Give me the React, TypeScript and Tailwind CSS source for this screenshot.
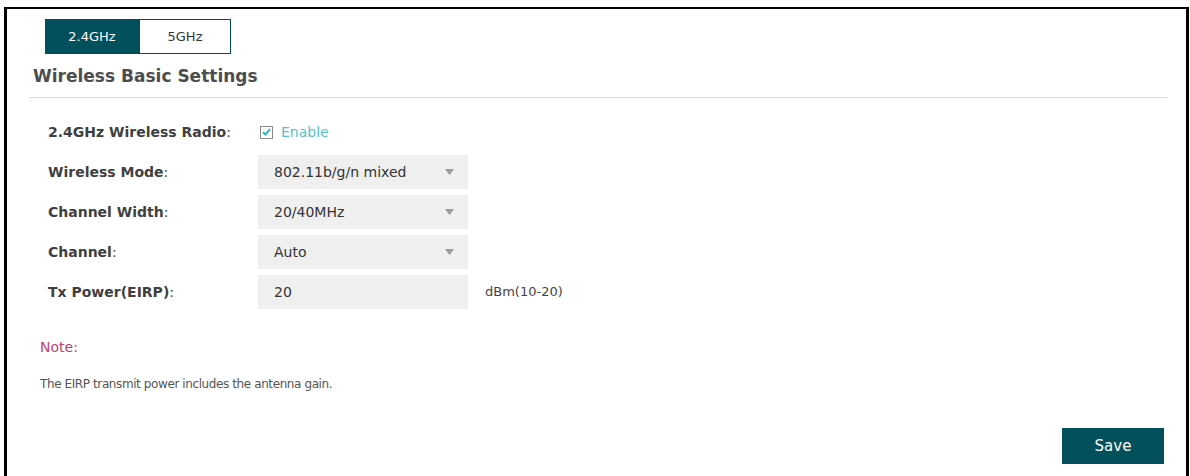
import { useState } from "react";

const selects = [
  { label: "Wireless Mode", value: "802.11b/g/n mixed" },
  { label: "Channel Width", value: "20/40MHz" },
  { label: "Channel", value: "Auto" },
];

function Label({ text }: { text: string }) {
  return (
    <div className="w-[210px] shrink-0 text-[14px] font-bold text-[#3f3f3f]">
      {text}
      <span className="font-normal">:</span>
    </div>
  );
}

function Caret() {
  return (
    <svg width="9" height="6" viewBox="0 0 9 6" className="shrink-0">
      <path d="M0 0 H9 L4.5 6 Z" fill="#9a9a9a" />
    </svg>
  );
}

export default function App() {
  const [band, setBand] = useState("2.4GHz");
  const [enabled, setEnabled] = useState(true);

  return (
    <div
      className="h-[476px] w-[1190px] bg-white pt-[7px] pl-[4px] pr-[1px]"
      style={{ fontFamily: '"DejaVu Sans", Verdana, sans-serif' }}
    >
      <div className="flex h-full flex-col border-t-2 border-l-[3px] border-r-[3px] border-black">
        {/* band tabs */}
        <div className="ml-[38px] mt-[10px] flex h-[35px]">
          {["2.4GHz", "5GHz"].map((b) => (
            <button
              key={b}
              onClick={() => setBand(b)}
              className={`flex items-center justify-center text-[13px] ${
                b === "2.4GHz" ? "w-[94px]" : "w-[92px]"
              } ${
                band === b
                  ? "bg-[#01505c] text-white"
                  : "border border-[#01505c] bg-white text-[#333]"
              }`}
            >
              {b}
            </button>
          ))}
        </div>

        <h2 className="ml-[26px] mt-[10px] text-[17px] font-bold leading-[24px] text-[#4d4d4d]">
          Wireless Basic Settings
        </h2>
        <div className="ml-[22px] mr-[19px] mt-[9px] h-px bg-[#dcdcdc]" />

        {/* settings form */}
        <div className="ml-[41px] mt-[17px] flex flex-col gap-[6px]">
          <div className="flex h-[34px] items-center">
            <Label text="2.4GHz Wireless Radio" />
            <label className="ml-[2px] flex cursor-pointer items-center gap-[8px]">
              <span
                onClick={() => setEnabled(!enabled)}
                className="flex h-[13px] w-[13px] items-center justify-center border border-[#8a8a8a] bg-white"
              >
                {enabled && (
                  <svg width="9" height="8" viewBox="0 0 9 8">
                    <path
                      d="M1 4.2 L3.5 6.5 L8 1.2"
                      fill="none"
                      stroke="#2fb3c6"
                      strokeWidth="2"
                    />
                  </svg>
                )}
              </span>
              <span className="text-[14px] text-[#55c2cc]">Enable</span>
            </label>
          </div>

          {selects.map((s) => (
            <div key={s.label} className="flex h-[34px] items-center">
              <Label text={s.label} />
              <div className="flex h-[34px] w-[210px] items-center justify-between bg-[#efefef] pl-[16px] pr-[14px] text-[14px] text-[#333]">
                <span>{s.value}</span>
                <Caret />
              </div>
            </div>
          ))}

          <div className="flex h-[34px] items-center">
            <Label text="Tx Power(EIRP)" />
            <div className="flex h-[34px] w-[210px] items-center bg-[#efefef] pl-[16px] text-[14px] text-[#333]">
              20
            </div>
            <span className="ml-[17px] text-[13px] text-[#444]">dBm(10-20)</span>
          </div>
        </div>

        <div className="ml-[33px] mt-[28px] text-[14px] text-[#c2416c]">Note:</div>
        <p className="ml-[33px] mt-[17px] text-[12px] tracking-[-0.4px] text-[#555]">
          The EIRP transmit power includes the antenna gain.
        </p>

        <div className="mr-[22px] mt-[35px] flex justify-end">
          <button className="h-[36px] w-[102px] bg-[#01505c] text-[15px] text-white">
            Save
          </button>
        </div>
      </div>
    </div>
  );
}
